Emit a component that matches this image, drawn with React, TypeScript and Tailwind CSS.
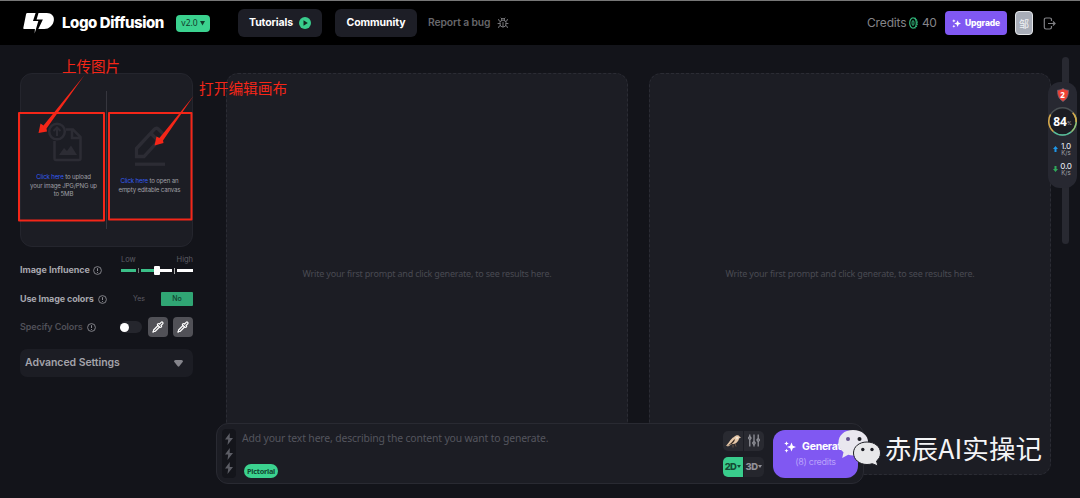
import React from "react";
import { Bug, LogOut, Pipette, SlidersVertical } from "lucide-react";

const Logo = () => (
  <svg width="33" height="22" viewBox="0 0 33 22" fill="#fff">
    <path d="M4.500.7H13L10.300 9H15.800L12 21.700 12.300 17.300H1.200Q0 17.300.3 16.200L3.200 1.700Q3.400.7 4.500.7Z" />
    <path d="M16 .7H24.500C29.500.7 32.500 4 31.800 8.500 31 13.500 27 17.300 22 17.300H15.800L20.500 7.300H14Z" />
  </svg>
);

const Sparkles = ({ size }: { size: number }) => (
  <svg width={size} height={size} viewBox="0 0 12 12" fill="#fff">
    <path d="m7.500 1.500 1.300 3.200L12 6 8.800 7.300 7.500 10.500 6.200 7.300 3 6l3.200-1.300Z" />
    <path d="m2.500.2.700 1.600 1.600.7-1.600.7-.7 1.600-.7-1.600-1.600-.7 1.600-.7ZM2.500 7.700l.6 1.400 1.400.6-1.400.6-.6 1.400-.6-1.400-1.400-.6 1.400-.6Z" />
  </svg>
);

const Info = ({ className }: { className: string }) => (
  <svg width="9" height="9" viewBox="0 0 9 9" fill="none" stroke="#8b8b92" className={className}>
    <circle cx="4.500" cy="4.500" r="3.900" strokeWidth="0.9" />
    <path d="M4.500 2.200v2.800M4.500 6v.9" strokeWidth="1" />
  </svg>
);

const Bolt = () => (
  <svg width="8" height="12" viewBox="0 0 8 12" fill="#5c5d65">
    <path d="M4.800 0 0 6.600h3.200L2.500 12 8 4.900H4.700Z" />
  </svg>
);

const Header = () => (
  <header className="flex h-[45px] items-center border-t border-[#777] bg-black">
    <div className="ml-[23px] flex w-[32px]">
      <Logo />
    </div>
    <div className="ml-[7px] w-[106px] text-[15px] leading-5 font-extrabold tracking-[-0.42px] whitespace-nowrap text-white">
      Logo Diffusion
    </div>
    <div className="ml-2 flex h-[17px] w-[34px] items-center justify-center gap-0.5 rounded-[4px] bg-[#3bd28f] font-['Noto_Sans'] text-[8.500px] text-[#123c2c]">
      v2.0
      <svg width="5" height="5" viewBox="0 0 5 5" fill="#123c2c">
        <path d="M0 0h5L2.500 4.500Z" />
      </svg>
    </div>
    <button className="ml-7 flex h-7 w-[84px] items-center justify-center gap-[6px] rounded-[6px] bg-[#1d1e26] text-[10.500px] font-bold tracking-[-0.13px] text-white">
      Tutorials
      <svg width="12" height="12" viewBox="0 0 12 12">
        <circle cx="6" cy="6" r="6" fill="#39cc8c" />
        <path d="M4.500 3.300v5.400L8.800 6Z" fill="#132720" />
      </svg>
    </button>
    <button className="ml-[13px] h-7 w-[82px] rounded-[6px] bg-[#1d1e26] text-[10.500px] font-bold tracking-[-0.08px] text-white">
      Community
    </button>
    <div className="ml-[11px] flex items-center text-[10.300px] font-semibold text-[#67676b]">
      <span className="w-[69px] whitespace-nowrap tracking-[-0.1px]">Report a bug</span>
      <Bug size={12} strokeWidth={2} color="#77777b" />
    </div>
    <div className="mr-[24px] ml-auto flex items-center">
      <span className="w-[42px] text-[12px] tracking-[-0.15px] text-[#858589]">Credits</span>
      <svg width="9" height="12" viewBox="0 0 9 12" fill="none" stroke="#31b77b">
        <ellipse cx="4" cy="6" rx="3.300" ry="5.200" strokeWidth="1.2" />
        <ellipse cx="4" cy="6" rx="1" ry="2.600" strokeWidth="1" />
        <path d="M5.500.9c2 1 2.800 3 2.800 5s-.8 4.200-2.800 5.200" strokeWidth="1.200" strokeDasharray="1.500 .7" />
      </svg>
      <span className="ml-[4px] w-[23px] text-[12px] tracking-[-0.4px] text-[#858589]">40</span>
      <button className="flex h-6 w-[62px] items-center justify-center gap-1 rounded-[4px] bg-[#8058f2] text-[8.500px] font-extrabold tracking-[-0.12px] text-white">
        <Sparkles size={9} />
        Upgrade
      </button>
      <div className="ml-[8px] flex h-6 w-[18px] items-center justify-center rounded-[4px] border border-[#e3e5e8] bg-[#a8adb8] font-['Noto_Sans_CJK_SC'] text-[10px] text-[#f0f1f4]">
        邹
      </div>
      <svg width="13" height="13" viewBox="0 0 13 13" fill="none" stroke="#818185" strokeWidth="1.200" className="ml-[10px]">
        <path d="M8.500 4V2.700Q8.500 1 6.800 1H3Q1.300 1 1.300 2.700v7.600Q1.300 12 3 12h3.800q1.700 0 1.700-1.700V9M5 6.500h7M10 4.500l2 2-2 2" />
      </svg>
    </div>
  </header>
);

const UploadIcon = () => (
  <svg width="37" height="41" viewBox="0 0 37 41" fill="none" stroke="#2c2c34" strokeWidth="2.500">
    <path d="M7.500 19v17.500q0 1.500 1.500 1.500h23q1.500 0 1.500-1.500V15L26 7.500h-7M25 8v8h8" />
    <circle cx="10" cy="9.500" r="7.800" />
    <path d="M10 14V6M6.500 9 10 5.500 13.500 9" strokeWidth="2" />
    <path d="m12 33 5-7 3 3 4-5.500 6 9.500Z" fill="#2c2c34" stroke="none" />
  </svg>
);

const PencilIcon = () => (
  <svg width="32" height="40" viewBox="0 0 32 40" fill="none" stroke="#2c2c34" strokeWidth="3.300">
    <path d="M2.500 30.500v-8L20.500 3.200c1.200-1.300 2.500-1.300 3.700-.2l4 4c1.200 1.200 1.200 2.500 0 3.700L10 30.500ZM17 7.500l7.500 7.500" />
    <path d="M1 38.200h30" />
  </svg>
);

const UploadBox = () => (
  <div className="flex h-[174px] rounded-[12px] border border-[#24252d] bg-[#1c1d24] text-center text-[6.100px] leading-[8.500px] text-[#a0a0a6]">
    <div className="flex w-[85px] flex-col items-center pt-[48px]">
      <div className="ml-[3px]">
        <UploadIcon />
      </div>
      <p className="mt-[10px] tracking-[-0.15px] whitespace-nowrap">
        <span className="text-[#345cf3]">Click here</span> to upload
        <br />
        your image JPG/PNG up
        <br />
        to 5MB
      </p>
    </div>
    <div className="mt-[17px] h-[138px] w-px bg-[#36363e]" />
    <div className="flex flex-1 flex-col items-center pt-[52px]">
      <PencilIcon />
      <p className="mt-[11px] tracking-[-0.15px] whitespace-nowrap">
        <span className="text-[#345cf3]">Click here</span> to open an
        <br />
        empty editable canvas
      </p>
    </div>
  </div>
);

const InfluenceSlider = () => (
  <div className="w-[72px]">
    <div className="flex justify-between text-[7.500px] leading-[10px] text-[#5c5c64]">
      <span>Low</span>
      <span>High</span>
    </div>
    <div className="flex h-[11px] items-center">
      <span className="h-[3px] w-[15px] bg-[#3bbf88]" />
      <span className="mx-[2px] h-[5px] w-px bg-[#777]" />
      <span className="h-[3px] w-[13px] bg-[#3bbf88]" />
      <span className="h-[9px] w-[6px] rounded-[1px] bg-white" />
      <span className="h-[3px] w-[12px] bg-white" />
      <span className="mx-[2px] h-[6px] w-px bg-[#aaa]" />
      <span className="h-[3px] flex-1 bg-white" />
    </div>
  </div>
);

const Swatch = () => (
  <button className="flex h-5 w-5 items-center justify-center rounded-[4px] bg-[#515157]">
    <Pipette size={12} strokeWidth={2.400} color="#fff" />
  </button>
);

const Sidebar = () => (
  <aside className="ml-5 w-[173px] pt-[28px]">
    <UploadBox />
    <div className="mt-[7px] flex h-[22px] items-end">
      <span className="text-[9px] leading-[12px] font-bold tracking-[-0.04px] whitespace-nowrap text-[#a6a6ad]">Image Influence</span>
      <Info className="mb-[1px] ml-[3px]" />
      <div className="ml-auto">
        <InfluenceSlider />
      </div>
    </div>
    <div className="mt-[16px] flex h-[14px] items-center">
      <span className="text-[9px] font-bold tracking-[-0.13px] whitespace-nowrap text-[#a6a6ad]">Use Image colors</span>
      <Info className="ml-[4px]" />
      <span className="ml-auto w-[28px] text-[7px] text-[#5c5c64]">Yes</span>
      <span className="flex h-[14px] w-8 items-center justify-center rounded-[1px] bg-[#30a674] text-[7px] font-medium text-[#10442f]">No</span>
    </div>
    <div className="mt-[11px] flex h-5 items-center">
      <span className="text-[9px] font-semibold tracking-[-0.1px] whitespace-nowrap text-[#505058]">Specify Colors</span>
      <Info className="ml-[4px]" />
      <div className="ml-auto flex h-[12px] w-[22px] items-center rounded-full bg-[#25262d]">
        <span className="h-[9px] w-[9px] rounded-full bg-white" />
      </div>
      <div className="ml-[6px] flex gap-[5px]">
        <Swatch />
        <Swatch />
      </div>
    </div>
    <div className="mt-[12px] flex h-7 items-center justify-between rounded-[7px] bg-[#1c1d24] pr-[10px] pl-[5px] text-[10.500px] font-semibold tracking-[-0.06px] text-[#a3a3aa]">
      Advanced Settings
      <svg width="9" height="7" viewBox="0 0 9 7" fill="#85858c">
        <path d="M1.500 0h6Q9 0 9 1.500L5.300 6.300q-.8.800-1.600 0L0 1.500Q0 0 1.500 0Z" />
      </svg>
    </div>
  </aside>
);

const ResultPanel = ({ className }: { className: string }) => (
  <section
    className={`flex h-[402px] items-center justify-center rounded-[12px] border border-dashed border-[#2b2c34] bg-[#1c1d24] font-['Noto_Sans'] text-[9px] text-[#494a52] ${className}`}
  >
    <span className="whitespace-nowrap tracking-[-0.2px]">Write your first prompt and click generate, to see results here.</span>
  </section>
);

const PromptBar = () => (
  <div className="absolute top-[423px] left-[216px] flex h-[61px] w-[648px] rounded-[12px] border border-[#292a32] bg-[#1c1d24]">
    <div className="mt-[5px] ml-[5px] flex h-[49px] w-[14px] flex-col items-center justify-between rounded-[4px] bg-[#14151b] pt-[4px] pb-[4px]">
      <Bolt />
      <Bolt />
      <Bolt />
    </div>
    <div className="ml-[6px] flex flex-1 flex-col items-start font-['Noto_Sans']">
      <p className="mt-[6px] text-[10.400px] leading-[17px] tracking-[-0.15px] whitespace-nowrap text-[#54555e]">
        Add your text here, describing the content you want to generate.
      </p>
      <span className="mt-[17px] ml-[2px] flex h-[14px] w-[34px] items-center justify-center rounded-full bg-[#3bd28f] text-[7.300px] font-bold tracking-[-0.25px] text-[#124630]">
        Pictorial
      </span>
    </div>
    <div className="mt-[7px] grid h-[46px] w-[41px] grid-cols-2 gap-x-px gap-y-[6px] text-[9.500px] font-extrabold tracking-[-0.6px]">
      <span className="flex items-center justify-center rounded-l-[5px] bg-[#292a31]">
        <svg width="16" height="14" viewBox="0 0 16 14">
          <path d="M1 11.500C4 9.500 5 5 9 3c1.500-1.700 4.500-2.500 5.500-.5L16 3.500l-1.700.7C13 8 10.500 10.500 7 10l-4 2.500Z" fill="#e5c7a8" />
          <path d="M1.500 12C5 10.500 7.500 7.500 9.500 5c1 2-2 5-4 5.500Z" fill="#33261f" />
          <path d="M8 10.500v3M10 9.500l1 3" stroke="#9a7657" strokeWidth=".6" />
          <path d="M10.500 3.500c1-1 2.500-1 3 0l-1.500 2Z" fill="#f3e7d9" />
        </svg>
      </span>
      <span className="flex items-center justify-center rounded-r-[5px] bg-[#292a31]">
        <svg width="12" height="13" viewBox="0 0 12 13" fill="#292a31" stroke="#9b9ca3" strokeWidth="1.200">
          <path d="M1.800.5v12M6 .5v12M10.200.5v12" />
          <circle cx="1.800" cy="4" r="1.200" />
          <circle cx="6" cy="9" r="1.200" />
          <circle cx="10.200" cy="6" r="1.200" />
        </svg>
      </span>
      <span className="flex items-center justify-center gap-[1px] rounded-l-[5px] bg-[#39cc8c] text-[#144b34]">
        2D
        <svg width="4" height="3" viewBox="0 0 4 3" fill="#144b34">
          <path d="M0 0h4L2 3Z" />
        </svg>
      </span>
      <span className="flex items-center justify-center gap-[1px] rounded-r-[5px] bg-[#25262d] text-[#919198]">
        3D
        <svg width="4" height="3" viewBox="0 0 4 3" fill="#919198">
          <path d="M0 0h4L2 3Z" />
        </svg>
      </span>
    </div>
    <button className="mt-[6px] mr-[5px] ml-[9px] flex h-[48px] w-[85px] flex-col items-center justify-center rounded-[12px] bg-[#8058f2]">
      <span className="flex items-center gap-[6px] text-[10.500px] leading-[16px] font-bold tracking-[-0.3px] text-white">
        <Sparkles size={12} />
        Generate
      </span>
      <span className="text-[9px] leading-[14px] tracking-[-0.3px] text-[#b9a1fb]">(8) credits</span>
    </button>
  </div>
);

const NetworkRow = ({ value, color, up }: { value: string; color: string; up: boolean }) => (
  <div className="flex w-full items-center pl-[4px]">
    <svg width="5" height="6" viewBox="0 0 5 6" fill={color} className={up ? "" : "rotate-180"}>
      <path d="M2.500 0 5 3H3.500v3h-2V3H0Z" />
    </svg>
    <div className="ml-[2px] w-[12px] text-center">
      <div className="text-[8px] leading-[8px] font-medium tracking-[-0.3px] text-[#dedfe4]">{value}</div>
      <div className="text-[6px] leading-[6px] whitespace-nowrap text-[#a4a5ac]">K/s</div>
    </div>
  </div>
);

// System monitor pinned to the right edge, above the scrollbar
const Monitor = () => (
  <div className="absolute top-[82px] left-[1048px] flex h-[106px] w-[29px] flex-col items-center rounded-[12px] bg-[#272831]">
    <div className="relative mt-[6px] h-[14px] w-[12px]">
      <svg width="12" height="14" viewBox="0 0 12 14">
        <path d="M6 .5c2 1.300 3.500 1.700 5.500 1.700C11.500 8 10 11 6 13.500 2 11 .5 8 .5 2.200 2.500 2.200 4 1.800 6 .5Z" fill="#ed4136" stroke="#655f72" strokeWidth=".8" />
      </svg>
      <span className="absolute inset-0 text-center font-['Noto_Sans'] text-[8px] leading-[13px] font-bold text-white">2</span>
    </div>
    <div className="relative mt-[5px] flex h-[29px] w-[29px] items-center justify-center">
      <svg width="29" height="29" viewBox="0 0 29 29" fill="none" strokeWidth="1.500" className="absolute inset-0">
        <circle cx="14.500" cy="14.500" r="13.700" fill="#1b1c22" stroke="#494f52" />
        <path d="M2.600 7.500a13.700 13.700 0 0 0 3 17.300" stroke="#d7a849" />
        <path d="M5.600 24.800a13.700 13.700 0 0 0 17.800 0" stroke="#55c09b" />
        <path d="M23.400 24.800a13.700 13.700 0 0 0 3-17.300" stroke="#8fc477" />
        <path d="M28.200 15a13.700 13.700 0 0 0-3.500-9.200" stroke="#d7a849" />
      </svg>
      <span className="relative font-['Open_Sans'] text-[12px] font-bold text-white">84</span>
      <span className="relative mt-[4px] text-[5px] text-[#b9bac0]">%</span>
    </div>
    <div className="mt-[6px] flex w-full flex-col gap-[6px] pl-[1px]">
      <NetworkRow value="1.0" color="#1e96e8" up />
      <NetworkRow value="0.0" color="#30a95b" up={false} />
    </div>
  </div>
);

const Annotations = () => (
  <>
    <svg width="300" height="230" viewBox="0 0 300 230" fill="none" className="pointer-events-none absolute top-0 left-0">
      <g stroke="#f42618" strokeWidth="2" strokeLinejoin="round">
        <rect x="19" y="113" width="85" height="107.500" />
        <rect x="109" y="113" width="82.500" height="106.500" />
      </g>
      <g fill="#f42618">
        <path d="M84.500 75 46.500 128.500 47 131.500 38.500 133 40.500 123.500 43.500 125.500Z" />
        <path d="M193.500 96 163 140.500 163.500 143 154.500 145.500 156.500 136.500 159.500 138Z" />
      </g>
    </svg>
    <div className="absolute top-[56px] left-[62px] font-['Noto_Sans_CJK_SC'] text-[14.500px] leading-[20px] whitespace-nowrap text-[#f42618]">上传图片</div>
    <div className="absolute top-[78px] left-[199px] font-['Noto_Sans_CJK_SC'] text-[14.700px] leading-[20px] whitespace-nowrap text-[#f42618]">打开编辑画布</div>
  </>
);

const Watermark = () => (
  <div className="absolute top-[428px] left-[838px] flex items-start">
    <svg width="43" height="38" viewBox="0 0 43 38">
      <path d="M15 2C6 2 .5 7.500.5 14.500c0 4 1.900 7.400 5 9.800L4.200 30l6-3.200c9 2.500 20-2.300 20-12.300C30.200 7.500 24 2 15 2Z" fill="#e9e7ef" />
      <path d="M29 14c-8 0-13.500 4.800-13.500 11S21 36.500 29 36.500c2 0 3.700-.3 5.300-.8L40 38l-1.500-5c2.600-2 4-4.700 4-8 0-6.200-5.500-11-13.500-11Z" fill="#e8e8ea" stroke="#1c1d24" strokeWidth="1" />
      <g fill="#1c1d24">
        <circle cx="10" cy="11" r="2" fill="#65528e" />
        <circle cx="21.500" cy="11" r="2" />
        <circle cx="24.800" cy="21.500" r="1.700" />
        <circle cx="34" cy="21.500" r="1.700" />
      </g>
    </svg>
    <span className="mt-[2px] ml-[4px] font-['Noto_Sans_CJK_SC'] text-[26.500px] leading-[36px] tracking-[0.1px] whitespace-nowrap text-[#f4f4f6]">赤辰AI实操记</span>
  </div>
);

const App: React.FC = () => {
  return (
    <div className="relative h-[498px] w-[1080px] overflow-hidden bg-[#13141a] font-[Inter,sans-serif]">
      <Header />
      <main className="flex h-[453px]">
        <Sidebar />
        <ResultPanel className="mt-[28px] ml-[33px] w-[402px]" />
        <ResultPanel className="mt-[28px] ml-[21px] w-[402px]" />
        <div className="mt-[12px] ml-[11px] h-[187px] w-[7px] rounded-full bg-[#282931]" />
      </main>
      <PromptBar />
      <Monitor />
      <Annotations />
      <Watermark />
    </div>
  );
};

export default App;
